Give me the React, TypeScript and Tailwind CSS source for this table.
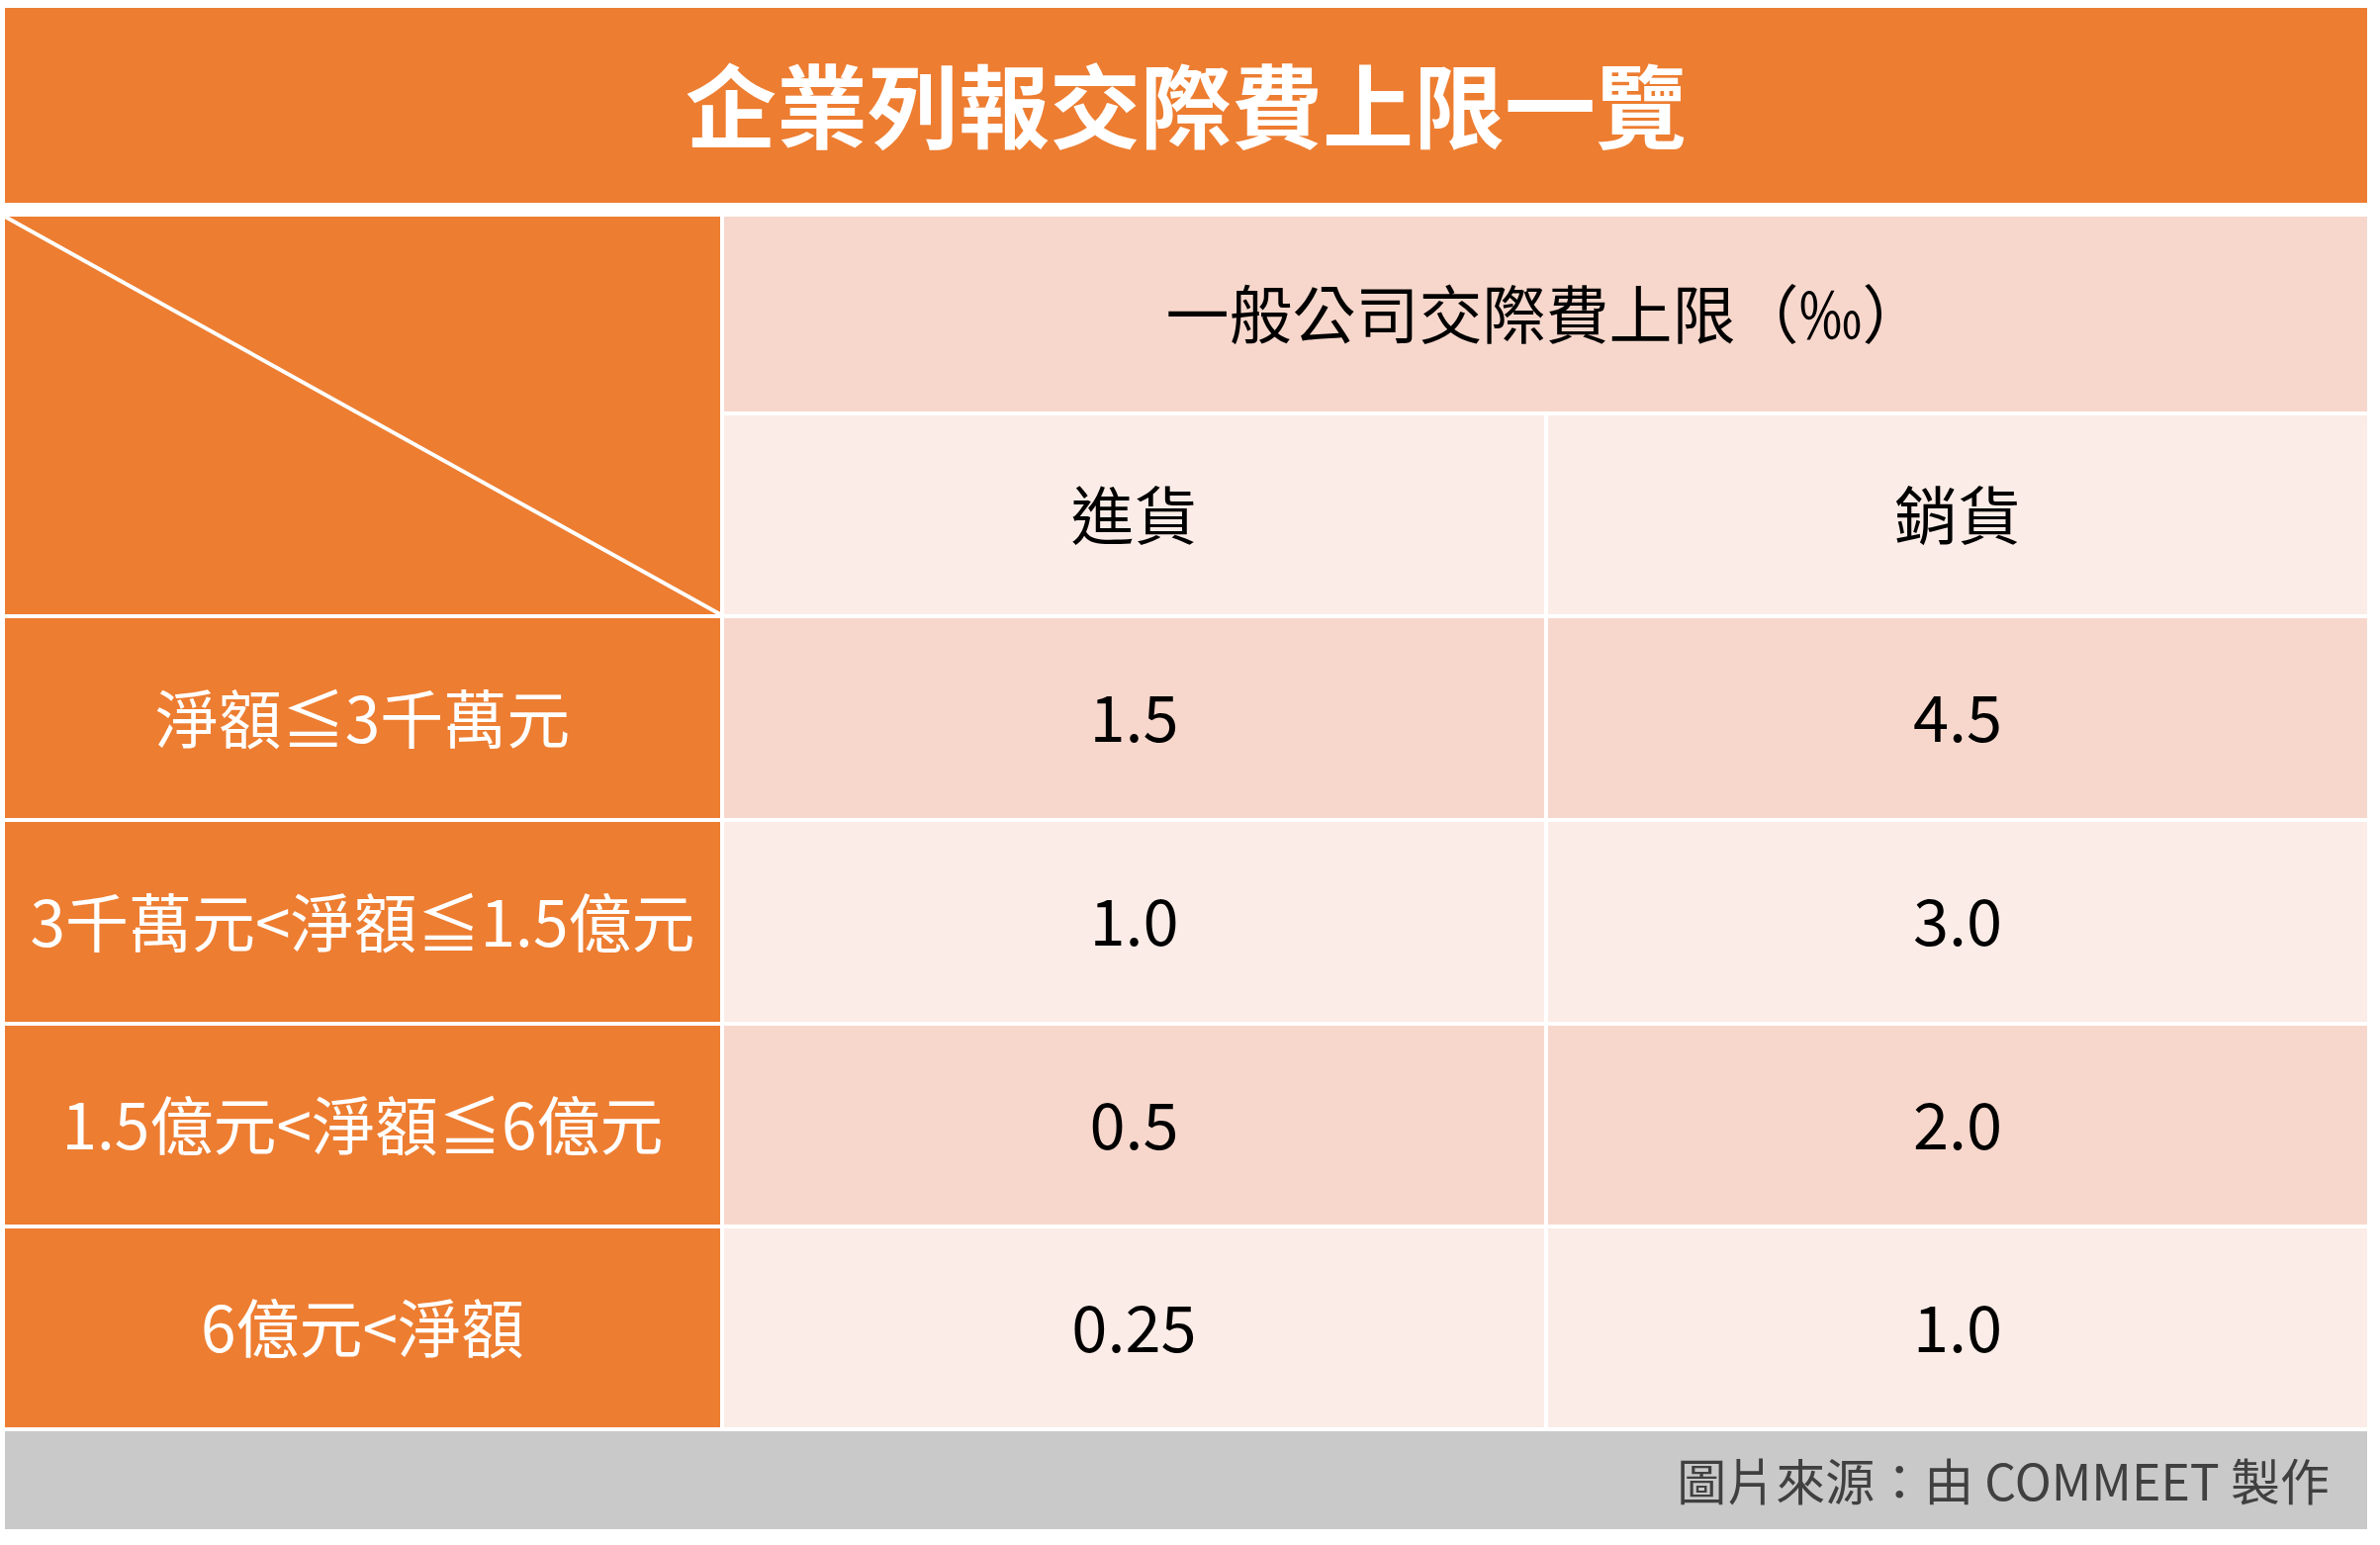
import React from "react";

const font = { fontFamily: '"Noto Sans CJK TC", "Noto Sans", sans-serif' };

const rows = [
  { label: "淨額≦3千萬元", a: "1.5", b: "4.5", dark: true },
  { label: "3千萬元<淨額≦1.5億元", a: "1.0", b: "3.0", dark: false },
  { label: "1.5億元<淨額≦6億元", a: "0.5", b: "2.0", dark: true },
  { label: "6億元<淨額", a: "0.25", b: "1.0", dark: false },
];

export default function App() {
  return (
    <div className="w-[2406px] h-[1562px] bg-white pl-[5px] pt-[8px]" style={font}>
      <div className="w-[2388px]">
        <div className="h-[197px] bg-[#ED7D31] flex items-center justify-center pb-[8px]">
          <span className="text-white font-bold text-[92px] leading-none">企業列報交際費上限一覽</span>
        </div>
        <div className="mt-[14px] grid grid-cols-[723px_829px_828px] grid-rows-[197px_201px_202px_202px_201px_201px] gap-x-[4px] gap-y-[4px]">
          <div className="row-span-2 bg-[#ED7D31] relative">
            <svg className="absolute inset-0" width="723" height="402" viewBox="0 0 723 402">
              <line x1="0" y1="0" x2="723" y2="402" stroke="white" strokeWidth="4" />
            </svg>
          </div>
          <div className="col-span-2 bg-[#F7D7CC] flex items-center justify-center pb-[7px]">
            <span className="text-black text-[64px] leading-none">一般公司交際費上限（‰）</span>
          </div>
          <div className="bg-[#FBECE7] flex items-center justify-center pb-[7px]">
            <span className="text-black text-[64px] leading-none">進貨</span>
          </div>
          <div className="bg-[#FBECE7] flex items-center justify-center pb-[7px]">
            <span className="text-black text-[64px] leading-none">銷貨</span>
          </div>
          {rows.map((r) => (
            <React.Fragment key={r.label}>
              <div className="bg-[#ED7D31] flex items-center justify-center pb-[7px]">
                <span className="text-white text-[64px] leading-none whitespace-nowrap">{r.label}</span>
              </div>
              <div className={(r.dark ? "bg-[#F7D7CC]" : "bg-[#FBECE7]") + " flex items-center justify-center pb-[7px]"}>
                <span className="text-black text-[65px] leading-none">{r.a}</span>
              </div>
              <div className={(r.dark ? "bg-[#F7D7CC]" : "bg-[#FBECE7]") + " flex items-center justify-center pb-[7px]"}>
                <span className="text-black text-[65px] leading-none">{r.b}</span>
              </div>
            </React.Fragment>
          ))}
        </div>
        <div className="mt-[4px] h-[99px] bg-[#C9C9C9] flex items-center justify-end pr-[38px] pb-[4px]">
          <span className="text-[#404040] text-[50px] leading-none">圖片來源：由 COMMEET 製作</span>
        </div>
      </div>
    </div>
  );
}
